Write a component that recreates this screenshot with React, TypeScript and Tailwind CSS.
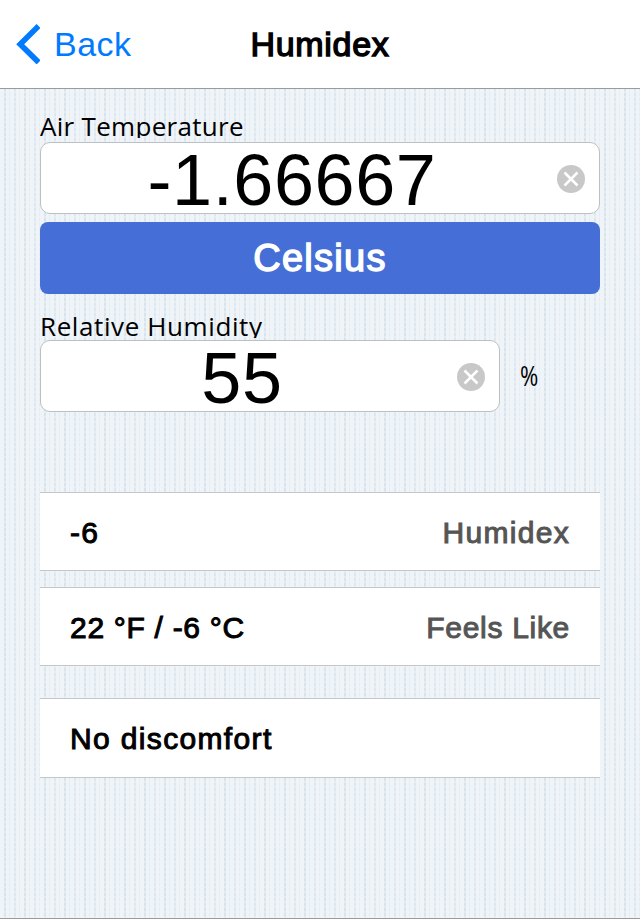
import type { ReactNode } from "react";

function ClearIcon() {
  return (
    <svg className="block size-7 shrink-0" viewBox="0 0 28 28" aria-hidden="true">
      <circle cx="14" cy="14" r="14" fill="#c8c8c8" />
      <path
        d="M7.5 7.5 20.5 20.5M20.5 7.5 7.5 20.5"
        stroke="#fff"
        strokeWidth="2.5"
        fill="none"
      />
    </svg>
  );
}

interface FieldLabelProps {
  className: string;
  children: ReactNode;
}

function FieldLabel({ className, children }: FieldLabelProps) {
  return (
    <div
      className={`h-[30px] overflow-hidden whitespace-nowrap font-['Open_Sans','Noto_Sans',sans-serif] text-[26px] leading-[36px] ${className}`}
    >
      {children}
    </div>
  );
}

interface FieldProps {
  className: string;
  children: ReactNode;
}

function Field({ className, children }: FieldProps) {
  return (
    <div
      className={`flex h-[72px] items-center rounded-[10px] border border-[#bdc0c3] bg-white pr-3.5 ${className}`}
    >
      <div className="mt-1 flex-1 whitespace-nowrap pr-3.5 text-center text-[72px] leading-[70px] tracking-[0.6px]">
        {children}
      </div>
      <button aria-label="Clear" className="pt-0.5">
        <ClearIcon />
      </button>
    </div>
  );
}

interface ResultRowProps {
  className: string;
  value: string;
  label?: string;
}

function ResultRow({ className, value, label }: ResultRowProps) {
  return (
    <div
      className={`flex items-center justify-between border-y border-[#c3c7ca] bg-white px-[30px] text-[30px] [-webkit-text-stroke:1px] ${className}`}
    >
      <span>{value}</span>
      {label && <span className="text-[#555]">{label}</span>}
    </div>
  );
}

export default function App() {
  return (
    <div className="flex h-[920px] w-[640px] flex-col overflow-hidden bg-white font-['Liberation_Sans',Arial,sans-serif] text-black">
      <header className="grid h-[89px] shrink-0 grid-cols-3 items-center border-b border-[#999b9d]">
        <button className="flex items-center gap-3.5 pl-4 text-[34px] tracking-[0.5px] text-[#007aff]">
          <svg className="h-10 w-6" viewBox="0 0 24 40" aria-hidden="true">
            <path
              d="M22.6 2 4.2 20.2 22.6 38.4"
              fill="none"
              stroke="currentColor"
              strokeWidth="5.6"
            />
          </svg>
          <span>Back</span>
        </button>
        <h1 className="text-center text-[34px] tracking-[0.7px] [-webkit-text-stroke:1.4px]">
          Humidex
        </h1>
      </header>

      <main className="flex h-[829px] shrink-0 flex-col bg-[#eff4f8] bg-[repeating-linear-gradient(0deg,rgba(239,244,248,0.5)_0_2px,transparent_2px_5px),repeating-linear-gradient(90deg,transparent_0_4px,#d9e3eb_4px_6px,transparent_6px_9px,#e4ebf1_9px_10px,transparent_10px_14px,#dfe7ee_14px_16px,transparent_16px_19px,#e6edf2_19px_20px)] px-10 pt-[19px]">
        <FieldLabel className="tracking-[0.3px]">Air Temperature</FieldLabel>
        <Field className="mt-1 w-[560px]">-1.66667</Field>
        <button className="mt-2 h-[72px] rounded-[8px] bg-[#456fd7] text-[38px] tracking-[1.3px] text-white [-webkit-text-stroke:1.4px]">
          Celsius
        </button>
        <FieldLabel className="mt-3.5 tracking-[0.6px]">
          Relative Humidity
        </FieldLabel>
        <div className="mt-0.5 flex items-center gap-5">
          <Field className="w-[460px]">55</Field>
          <span className="origin-left scale-x-[0.82] font-['Open_Sans','Noto_Sans',sans-serif] text-[27px]">
            %
          </span>
        </div>

        <div className="mt-20 flex flex-col gap-4">
          <ResultRow
            className="h-[79px] pt-0.5 tracking-[1.3px]"
            value="-6"
            label="Humidex"
          />
          <ResultRow
            className="h-[79px] pt-0.5 tracking-[0.7px]"
            value="22 °F / -6 °C"
            label="Feels Like"
          />
        </div>
        <ResultRow
          className="mt-8 h-20 tracking-[1.35px]"
          value="No discomfort"
        />
      </main>
      <div className="h-px shrink-0 bg-[#999b9d]" />
    </div>
  );
}
